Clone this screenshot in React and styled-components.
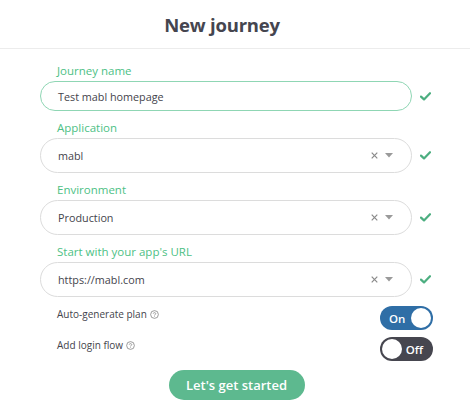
import React from "react";
import styled, { createGlobalStyle } from "styled-components";

const Global = createGlobalStyle`
  html, body { margin: 0; padding: 0; background: #fff; }
  body { font-family: "Open Sans", "Noto Sans", sans-serif; color: #44444c; }
  * { box-sizing: border-box; }
`;

const Page = styled.div`
  width: 470px;
  height: 419px;
  background: #fff;
`;

const Header = styled.header`
  height: 49px;
  border-bottom: 1px solid #ececec;
  display: flex;
  align-items: center;
  justify-content: center;
  padding-right: 26px;
`;

const Title = styled.h1`
  margin: 0;
  font-family: "Open Sans", sans-serif;
  font-weight: 700;
  font-size: 18.5px;
  letter-spacing: -0.2px;
  color: #45454f;
`;

const Form = styled.div`
  padding: 15px 0 0 40px;
  display: flex;
  flex-direction: column;
`;

const Field = styled.div`
  display: flex;
  flex-direction: column;
  margin-bottom: 10px;
`;

const Label = styled.div`
  font-size: 11.5px;
  line-height: 14px;
  color: #4dbf85;
  padding-left: 17px;
  margin-bottom: 3px;
`;

const Row = styled.div`
  display: flex;
  align-items: center;
`;

const Box = styled.div`
  width: 372px;
  height: ${(p) => (p.$select ? 35 : 30)}px;
  border: 1px solid ${(p) => (p.$focus ? "#8fd6b4" : "#dcdcdc")};
  border-radius: 18px;
  display: flex;
  align-items: center;
  padding: 0 18px 0 17px;
  font-size: 10.8px;
  color: #44444c;
`;

const Value = styled.span`
  flex: 1;
`;

const Controls = styled.span`
  display: flex;
  align-items: center;
  gap: 7px;
  color: #8a8a8a;
`;

const Check = styled.span`
  margin-left: 8px;
  display: flex;
  align-items: center;
`;

const ToggleRow = styled.div`
  display: flex;
  align-items: center;
  justify-content: space-between;
  padding-left: 17px;
  width: 393px;
  height: 24px;
  margin-bottom: 7px;
  font-size: 10px;
  color: #44444c;
`;

const LabelText = styled.span`
  display: flex;
  align-items: center;
  gap: 3px;
  margin-top: -8px;
`;

const Toggle = styled.div`
  width: 53px;
  height: 24px;
  border-radius: 12px;
  background: ${(p) => (p.$on ? "#2f6ea6" : "#46464f")};
  display: flex;
  align-items: center;
  flex-direction: ${(p) => (p.$on ? "row" : "row-reverse")};
  justify-content: space-between;
  padding-left: ${(p) => (p.$on ? 9 : 2)}px;
  padding-right: ${(p) => (p.$on ? 2 : 10)}px;
  color: #fff;
  font-size: 11.5px;
  font-weight: 600;
`;

const Knob = styled.span`
  width: 20px;
  height: 20px;
  border-radius: 50%;
  background: #fff;
`;

const Toggles = styled.div`
  margin-top: -1px;
  display: flex;
  flex-direction: column;
`;

const ButtonWrap = styled.div`
  width: 393px;
  display: flex;
  justify-content: center;
  margin-top: 2px;
`;

const Button = styled.button`
  width: 136px;
  height: 30px;
  border: none;
  border-radius: 15px;
  background: #5db98f;
  color: #fff;
  font-family: "Open Sans", sans-serif;
  font-size: 13px;
  font-weight: 600;
  padding: 0;
`;

const CheckIcon = () => (
  <svg width="11" height="9" viewBox="0 0 11 9">
    <path d="M1 4.6 L4 7.4 L10 1.2" fill="none" stroke="#4cae80" strokeWidth="2.2" strokeLinecap="round" strokeLinejoin="round" />
  </svg>
);

const ClearIcon = () => (
  <svg width="7" height="7" viewBox="0 0 7 7">
    <path d="M0.7 0.7 L6.3 6.3 M6.3 0.7 L0.7 6.3" stroke="#8a8a8a" strokeWidth="1.2" />
  </svg>
);

const Caret = () => (
  <svg width="8" height="5" viewBox="0 0 8 5">
    <path d="M0 0 L8 0 L4 4.5 Z" fill="#9a9a9a" />
  </svg>
);

const Help = () => (
  <svg width="9" height="9" viewBox="0 0 10 10">
    <circle cx="5" cy="5" r="4.3" fill="none" stroke="#777" strokeWidth="0.8" />
    <path d="M3.6 4 C3.6 2.6 6.4 2.6 6.4 4 C6.4 5 5 5 5 6.1" fill="none" stroke="#777" strokeWidth="0.8" />
    <circle cx="5" cy="7.4" r="0.5" fill="#777" />
  </svg>
);

const fields = [
  { label: "Journey name", value: "Test mabl homepage", select: false, focus: true },
  { label: "Application", value: "mabl", select: true },
  { label: "Environment", value: "Production", select: true },
  { label: "Start with your app's URL", value: "https://mabl.com", select: true },
];

export default function App() {
  return (
    <Page>
      <Global />
      <Header>
        <Title>New journey</Title>
      </Header>
      <Form>
        {fields.map((f) => (
          <Field key={f.label}>
            <Label>{f.label}</Label>
            <Row>
              <Box $select={f.select} $focus={f.focus}>
                <Value>{f.value}</Value>
                {f.select && (
                  <Controls>
                    <ClearIcon />
                    <Caret />
                  </Controls>
                )}
              </Box>
              <Check>
                <CheckIcon />
              </Check>
            </Row>
          </Field>
        ))}
        <Toggles>
          <ToggleRow>
            <LabelText>Auto-generate plan <Help /></LabelText>
            <Toggle $on>
              On
              <Knob />
            </Toggle>
          </ToggleRow>
          <ToggleRow>
            <LabelText>Add login flow <Help /></LabelText>
            <Toggle>
              Off
              <Knob />
            </Toggle>
          </ToggleRow>
        </Toggles>
        <ButtonWrap>
          <Button>Let's get started</Button>
        </ButtonWrap>
      </Form>
    </Page>
  );
}
